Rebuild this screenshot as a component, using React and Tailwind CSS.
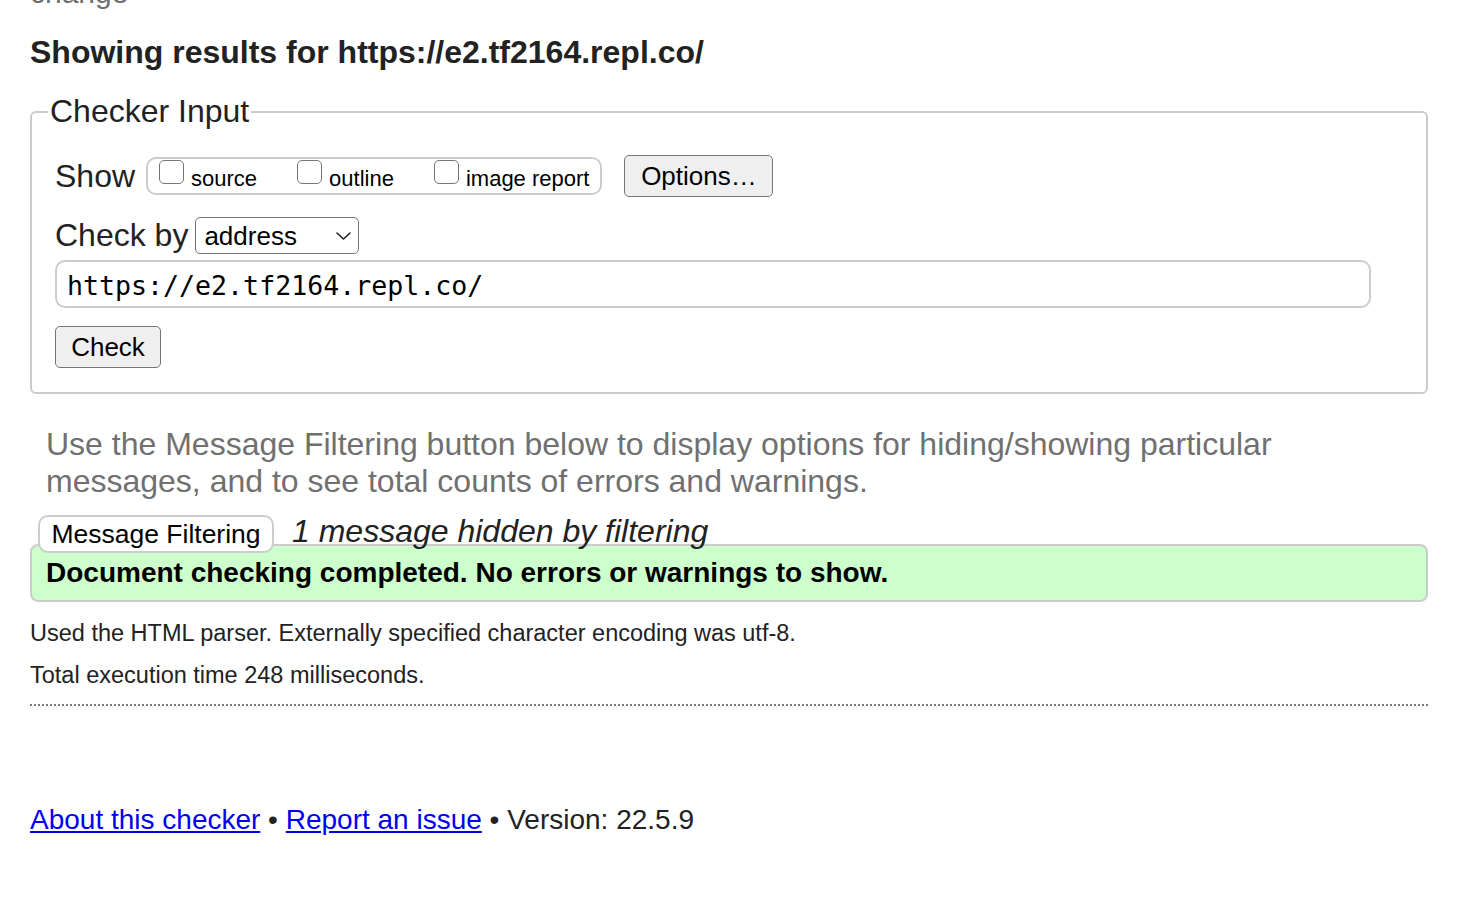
function Checkbox({ label }) {
  return (
    <label className="flex items-start gap-[7px]">
      <span className="mt-[1px] block h-[24px] w-[25px] rounded-[5px] border-[1.5px] border-[#767676] bg-white" />
      <span className="mt-[7px] text-[22px] leading-[26px] text-black">{label}</span>
    </label>
  )
}

function Chevron() {
  return (
    <svg width="15" height="8" viewBox="0 0 15 8" fill="none" className="shrink-0">
      <path d="M1 1l6.5 6L14 1" stroke="#222" strokeWidth="1.6" strokeLinecap="round" strokeLinejoin="round" />
    </svg>
  )
}

function CheckerInput() {
  return (
    <fieldset className="mt-[22px] rounded-[6px] border-2 border-[#cccccc] pl-[23px] pb-[24px]">
      <legend className="-ml-[7px] px-[2px] text-[32px] leading-[37px]">Checker Input</legend>

      {/* Show row */}
      <div className="mt-[25px] flex h-[42px] items-center">
        <span className="text-[32px] leading-[37px]">Show</span>
        <div className="ml-[11px] flex h-[38px] items-start gap-[40px] rounded-[10px] border-2 border-[#cccccc] px-[11px]">
          <Checkbox label="source" />
          <Checkbox label="outline" />
          <Checkbox label="image report" />
        </div>
        <button className="ml-[22px] h-[42px] w-[149px] rounded-[5px] border-[1.5px] border-[#767676] bg-[#efefef] text-[26px] leading-[30px] text-black">
          Options…
        </button>
      </div>

      {/* Check by row */}
      <div className="mt-[20px] flex h-[37px] items-center">
        <span className="text-[32px] leading-[37px]">Check by</span>
        <div className="ml-[7px] flex h-[37px] w-[164px] items-center justify-between rounded-[5px] border-[1.5px] border-[#767676] bg-white pl-[8px] pr-[7px]">
          <span className="text-[26px] leading-[30px] text-black">address</span>
          <Chevron />
        </div>
      </div>

      <div className="mt-[6px] flex h-[48px] w-[1316px] items-center rounded-[10px] border-2 border-[#cccccc] pl-[10px] pt-[3px] font-['DejaVu_Sans_Mono',Menlo,monospace] text-[26.6px] text-black">
        https://e2.tf2164.repl.co/
      </div>

      <button className="mt-[18px] h-[42px] w-[106px] rounded-[5px] border-[1.5px] border-[#767676] bg-[#efefef] text-[26px] leading-[30px] text-black">
        Check
      </button>
    </fieldset>
  )
}

export default function App() {
  return (
    <div className="flex min-h-[924px] flex-col bg-white px-[30px] font-['Liberation_Sans',Arial,sans-serif] text-[#222]">
      <div className="-mt-[22px] text-[30px] leading-[30px] text-[#707070]">change</div>

      <h2 className="mt-[26px] text-[32px] font-bold leading-[37px]">
        Showing results for https://e2.tf2164.repl.co/
      </h2>

      <CheckerInput />

      <p className="mt-[32px] px-[16px] text-[32px] leading-[37px] text-[#707070]">
        Use the Message Filtering button below to display options for hiding/showing particular
        messages, and to see total counts of errors and warnings.
      </p>

      <div className="mt-[14px] flex items-end">
        <button className="relative z-10 -mb-[9px] ml-[8px] h-[38px] w-[236px] rounded-[10px] border-2 border-[#cccccc] bg-white text-[26.5px] leading-[30px] text-black">
          Message Filtering
        </button>
        <span className="relative z-10 ml-[18px] h-[30px] text-[32px] italic leading-[34px]">1 message hidden by filtering</span>
      </div>
      <div className="flex h-[58px] items-center rounded-[8px] border-2 border-[#cccccc] bg-[#ccffcc] px-[14px] text-[28px] font-bold leading-[32px] text-black">
        Document checking completed. No errors or warnings to show.
      </div>

      <p className="mt-[18px] text-[23.5px] leading-[27px]">
        Used the HTML parser. Externally specified character encoding was utf-8.
      </p>
      <p className="mt-[15px] text-[23.5px] leading-[27px]">Total execution time 248 milliseconds.</p>

      <hr className="mt-[15px] border-0 border-t-2 border-dotted border-[#777777]" />

      <p className="mt-[98px] text-[28px] leading-[32px]">
        <a href="#" className="text-[#0000ee] underline">About this checker</a>
        {' • '}
        <a href="#" className="text-[#0000ee] underline">Report an issue</a>
        {' • Version: 22.5.9'}
      </p>
    </div>
  )
}
